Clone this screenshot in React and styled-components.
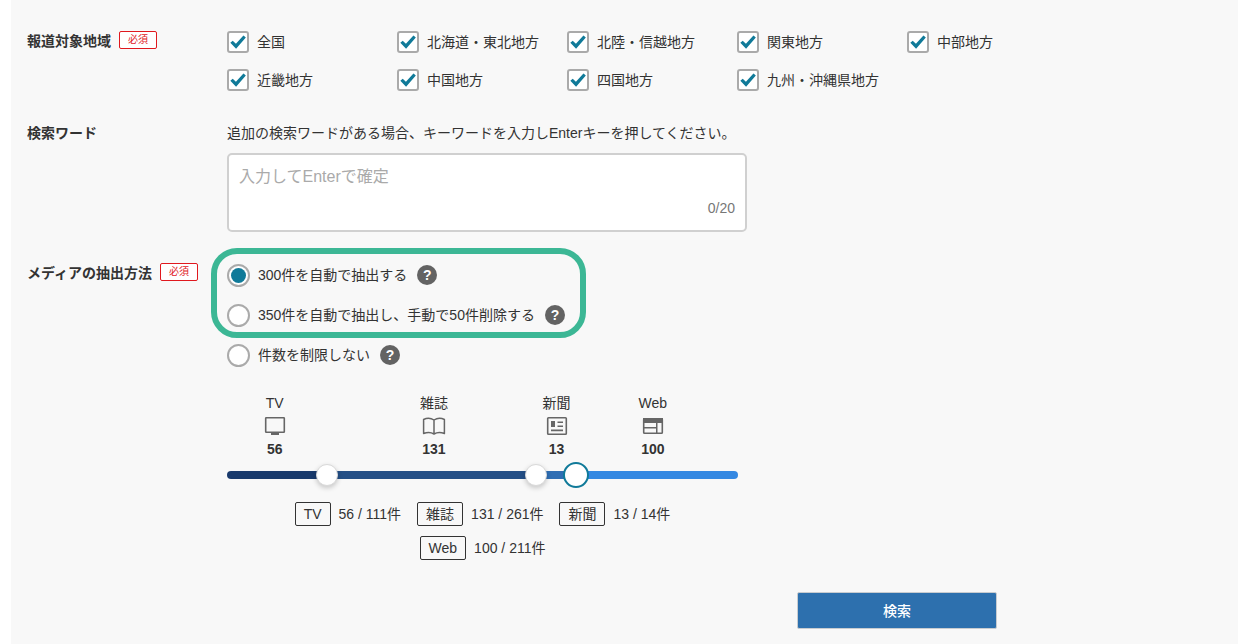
import React, { useState } from "react";
import styled, { createGlobalStyle } from "styled-components";

const AREAS = [
  "全国",
  "北海道・東北地方",
  "北陸・信越地方",
  "関東地方",
  "中部地方",
  "近畿地方",
  "中国地方",
  "四国地方",
  "九州・沖縄県地方",
];

const LIMITED_METHODS = [
  { id: "auto300", label: "300件を自動で抽出する" },
  { id: "auto350", label: "350件を自動で抽出し、手動で50件削除する" },
];
const UNLIMITED_METHOD = { id: "unlimited", label: "件数を制限しない" };

const MEDIA = [
  { id: "tv", label: "TV", count: 56, total: 111, span: 100, color: "#193a6c" },
  { id: "magazine", label: "雑誌", count: 131, total: 261, span: 209, color: "#244f86" },
  { id: "newspaper", label: "新聞", count: 13, total: 14, span: 40, color: "#2f6eb4" },
  { id: "web", label: "Web", count: 100, total: 211, span: 162, color: "#3488e2" },
];

const HANDLES = [
  { id: "tv", label: "TVと雑誌の境界", value: 182 },
  { id: "magazine", label: "雑誌と新聞の境界", value: 609 },
  { id: "newspaper", label: "新聞とWebの境界", value: 693, active: true },
];

function MediaIcon({ id }) {
  return (
    <IconSvg viewBox="0 0 24 24" aria-hidden="true">
      {id === "tv" && (
        <>
          <rect x="2.7" y="3.7" width="18.6" height="14.6" rx="0.6" fill="none" stroke="currentColor" strokeWidth="1.6" />
          <path d="M8 18.5h8V21H8z" />
        </>
      )}
      {id === "magazine" && (
        <path
          d="M12 6C9 4 4.5 4 1.6 5.5V19.5C5 18.2 9 18.2 12 20C15 18.2 19 18.2 22.4 19.5V5.5C19.5 4 15 4 12 6V20"
          fill="none"
          stroke="currentColor"
          strokeWidth="1.5"
          strokeLinejoin="round"
        />
      )}
      {id === "newspaper" && (
        <>
          <rect x="2.7" y="3.7" width="18.6" height="16.6" rx="0.8" fill="none" stroke="currentColor" strokeWidth="1.6" />
          <path d="M6 7h4v6H6zM12.500 7.500h5.500v1.500h-5.500zM12.500 11.500h5.500v1.500h-5.500zM6 15.500h12V17.200H6z" />
        </>
      )}
      {id === "web" && (
        <>
          <rect x="2.7" y="4.7" width="18.6" height="14.6" rx="0.8" fill="none" stroke="currentColor" strokeWidth="1.6" />
          <path d="M2 4h20v5H2zM2 13h14v1.5H2zM15 9h1.5v10H15z" />
        </>
      )}
    </IconSvg>
  );
}

function MethodOption({ option, value, onChange }) {
  return (
    <MethodRow>
      <MethodLabel>
        <Radio
          name="method"
          value={option.id}
          checked={value === option.id}
          onChange={() => onChange(option.id)}
        />
        {option.label}
      </MethodLabel>
      <HelpButton type="button" aria-label={`${option.label}の説明`}>
        ?
      </HelpButton>
    </MethodRow>
  );
}

export default function App() {
  const [areas, setAreas] = useState(AREAS);
  const [word, setWord] = useState("");
  const [method, setMethod] = useState("auto300");
  const [handles, setHandles] = useState(HANDLES.map((h) => h.value));

  const toggleArea = (area) =>
    setAreas((prev) =>
      prev.includes(area) ? prev.filter((a) => a !== area) : [...prev, area]
    );

  return (
    <>
      <GlobalStyle />
      <Panel>
        <Form onSubmit={(e) => e.preventDefault()}>
          <Row role="group" aria-labelledby="area-title">
            <Heading>
              <Title id="area-title">報道対象地域</Title>
              <Required>必須</Required>
            </Heading>
            <AreaGrid>
              {AREAS.map((area) => (
                <AreaLabel key={area}>
                  <Checkbox checked={areas.includes(area)} onChange={() => toggleArea(area)} />
                  {area}
                </AreaLabel>
              ))}
            </AreaGrid>
          </Row>

          <Row>
            <Heading>
              <Title as="label" htmlFor="word">検索ワード</Title>
            </Heading>
            <Field>
              <Description id="word-help">
                追加の検索ワードがある場合、キーワードを入力しEnterキーを押してください。
              </Description>
              <WordBox>
                <WordInput
                  id="word"
                  aria-describedby="word-help"
                  placeholder="入力してEnterで確定"
                  maxLength={20}
                  value={word}
                  onChange={(e) => setWord(e.target.value)}
                />
                <Counter>{word.length}/20</Counter>
              </WordBox>
            </Field>
          </Row>

          <MethodSection role="radiogroup" aria-labelledby="method-title">
            <Heading>
              <Title id="method-title">メディアの抽出方法</Title>
              <Required>必須</Required>
            </Heading>
            <Field>
              <Highlighted>
                {LIMITED_METHODS.map((m) => (
                  <MethodOption key={m.id} option={m} value={method} onChange={setMethod} />
                ))}
              </Highlighted>
              <MethodOption option={UNLIMITED_METHOD} value={method} onChange={setMethod} />

              <Allocation>
                <MediaColumns>
                  {MEDIA.map((m) => (
                    <MediaColumn key={m.id} $weight={m.count}>
                      <span>{m.label}</span>
                      <MediaIcon id={m.id} />
                      <strong>{m.count}</strong>
                    </MediaColumn>
                  ))}
                </MediaColumns>
                <Slider>
                  <Track>
                    {MEDIA.map((m) => (
                      <Segment key={m.id} $weight={m.span} $color={m.color} />
                    ))}
                  </Track>
                  {HANDLES.map((h, i) => (
                    <Range
                      key={h.id}
                      aria-label={h.label}
                      $active={h.active}
                      value={handles[i]}
                      onChange={(e) =>
                        setHandles(handles.map((v, n) => (n === i ? Number(e.target.value) : v)))
                      }
                    />
                  ))}
                </Slider>
                <Totals>
                  {MEDIA.map((m) => (
                    <Total key={m.id}>
                      <Tag>{m.label}</Tag>
                      <span>{m.count} / {m.total}件</span>
                    </Total>
                  ))}
                </Totals>
              </Allocation>
            </Field>
          </MethodSection>

          <Actions>
            <SubmitButton type="submit">検索</SubmitButton>
          </Actions>
        </Form>
      </Panel>
    </>
  );
}

const GlobalStyle = createGlobalStyle`
  * { box-sizing: border-box; }
  body {
    margin: 0;
    background: #fff;
    color: #333;
    font-family: "Liberation Sans", "Noto Sans CJK JP", sans-serif;
    font-size: 14px;
    line-height: 20px;
  }
  button, input { font: inherit; color: inherit; }
`;

const Panel = styled.main`
  min-height: 100vh;
  margin-left: 11px;
  padding: 31px 16px 15px;
  background: #f8f8f8;
`;

const Form = styled.form`
  max-width: 970px;
`;

const Heading = styled.div`
  display: flex;
  align-items: flex-start;
  gap: 8px;
`;

const Row = styled.div`
  display: grid;
  grid-template-columns: 200px minmax(0, 1fr);
  margin-bottom: 32px;
`;

/* ラジオの行が高いので、見出しを1行目の文字に揃える */
const MethodSection = styled(Row)`
  margin-top: -9px;

  > ${Heading} { padding-top: 8px; }
`;

const Title = styled.span`
  font-weight: 700;
`;

const Required = styled.span`
  padding: 0 8px;
  border: 1px solid #e0181e;
  border-radius: 2px;
  background: #fff;
  color: #e0181e;
  font-size: 10px;
  line-height: 16px;
`;

const AreaGrid = styled.div`
  display: grid;
  grid-template-columns: repeat(4, 170px) auto;
  row-gap: 16px;
`;

const AreaLabel = styled.label`
  display: flex;
  align-items: center;
  gap: 8px;
  height: 22px;
  white-space: nowrap;
`;

const Checkbox = styled.input.attrs({ type: "checkbox" })`
  appearance: none;
  display: grid;
  place-items: center;
  width: 22px;
  height: 22px;
  margin: 0;
  border: 2px solid #aaa;
  border-radius: 3px;
  background: #fff;

  &:checked::before {
    content: "";
    width: 16px;
    height: 14px;
    background: #107a99;
    clip-path: polygon(2% 56%, 17% 41%, 37% 63%, 84% 4%, 99% 18%, 38% 99%);
  }
`;

const Field = styled.div`
  min-width: 0;
`;

const Description = styled.p`
  margin: 0 0 10px;
`;

const WordBox = styled.div`
  display: flex;
  flex-direction: column;
  max-width: 520px;
  padding: 10px 10px 12px;
  border: 2px solid #d0d0d0;
  border-radius: 5px;
  background: #fff;
`;

const WordInput = styled.input`
  height: 24px;
  padding: 0;
  border: 0;
  outline: 0;
  background: none;
  font-size: 16px;

  &::placeholder { color: #aaa; }
`;

const Counter = styled.span`
  margin-top: 9px;
  color: #777;
  text-align: right;
`;

const Highlighted = styled.div`
  position: relative;
  width: fit-content;

  /* 強調枠 */
  &::after {
    content: "";
    position: absolute;
    inset: -7px -21px -3px -16px;
    border: 6px solid #3cb795;
    border-radius: 26px;
    pointer-events: none;
  }
`;

const MethodRow = styled.div`
  display: flex;
  align-items: center;
  gap: 10px;
  height: 40px;
`;

const MethodLabel = styled.label`
  display: flex;
  align-items: center;
  gap: 8px;
`;

const Radio = styled.input.attrs({ type: "radio" })`
  appearance: none;
  display: grid;
  place-items: center;
  width: 23px;
  height: 23px;
  margin: 0;
  border: 2px solid #aaa;
  border-radius: 50%;
  background: #fff;

  &:checked::before {
    content: "";
    width: 15px;
    height: 15px;
    border-radius: 50%;
    background: #107a99;
  }
`;

const HelpButton = styled.button`
  width: 20px;
  height: 20px;
  padding: 0;
  border: 0;
  border-radius: 50%;
  background: #636363;
  color: #fff;
  font-size: 14px;
  font-weight: 700;
  line-height: 20px;
`;

const Allocation = styled.div`
  max-width: 511px;
  margin-top: 18px;
`;

const MediaColumns = styled.div`
  display: flex;
`;

const MediaColumn = styled.div`
  flex: ${({ $weight }) => $weight} 1 0;
  min-width: 0;
  display: flex;
  flex-direction: column;
  align-items: center;
  white-space: nowrap;
`;

const IconSvg = styled.svg`
  flex-shrink: 0;
  width: 24px;
  height: 24px;
  margin: 1px 0;
  fill: currentColor;
  color: #666;
`;

const Slider = styled.div`
  display: grid;
  align-items: center;
  height: 26px;
  margin-top: 3px;

  > * { grid-area: 1 / 1; }
`;

const Track = styled.div`
  display: flex;
  height: 8px;
  border-radius: 4px;
  overflow: hidden;
`;

const Segment = styled.div`
  flex: ${({ $weight }) => $weight} 1 0;
  background: ${({ $color }) => $color};
`;

const Range = styled.input.attrs({ type: "range", min: 0, max: 1000 })`
  appearance: none;
  width: 100%;
  height: 26px;
  margin: 0;
  background: none;
  pointer-events: none;

  &::-webkit-slider-thumb {
    appearance: none;
    width: ${({ $active }) => ($active ? "26px" : "22px")};
    height: ${({ $active }) => ($active ? "26px" : "22px")};
    border: ${({ $active }) => ($active ? "2px solid #107a99" : "1px solid #d9d9d9")};
    border-radius: 50%;
    background: #fff;
    box-shadow: ${({ $active }) => ($active ? "none" : "0 2px 5px rgba(0, 0, 0, 0.2)")};
    pointer-events: auto;
  }
`;

const Totals = styled.div`
  display: flex;
  flex-wrap: wrap;
  justify-content: center;
  gap: 10px 16px;
  margin-top: 14px;
`;

const Total = styled.div`
  display: flex;
  align-items: center;
  gap: 8px;
`;

const Tag = styled.span`
  padding: 1px 8px;
  border: 1px solid #333;
  border-radius: 2px;
`;

const Actions = styled.div`
  display: flex;
  justify-content: flex-end;
`;

const SubmitButton = styled.button`
  width: 200px;
  height: 37px;
  border: 1px solid #c8ccd0;
  border-radius: 2px;
  background: #2d70ae;
  color: #fff;
  font-weight: 500;
`;
